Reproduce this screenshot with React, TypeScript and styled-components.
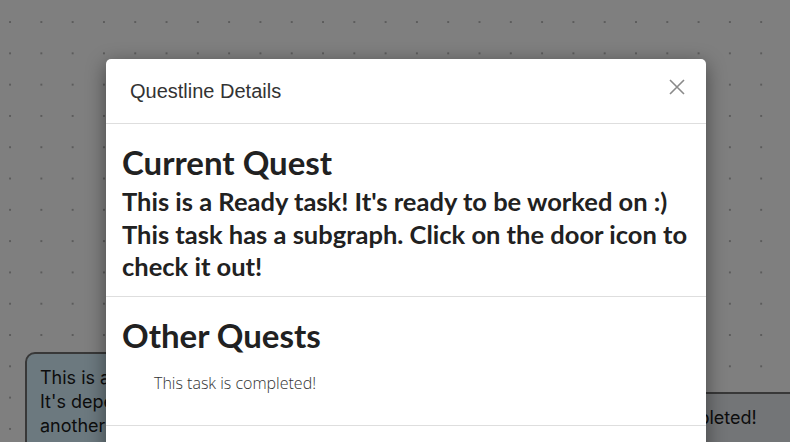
import React from "react";
import styled, { createGlobalStyle } from "styled-components";

const Global = createGlobalStyle`
  html, body { margin: 0; padding: 0; }
  body { width: 790px; height: 442px; overflow: hidden; font-family: "Lato", "Open Sans", sans-serif; }
  #root { width: 790px; height: 442px; }
`;

const Canvas = styled.div`
  position: relative;
  width: 790px;
  height: 442px;
  overflow: hidden;
  background-color: #ffffff;
  background-image: radial-gradient(circle, #b8b8b8 0.8px, transparent 1.2px);
  background-size: 31.3px 31.3px;
  background-position: -5.6px 6.4px;
`;

const Node = styled.div<{ $x: number; $y: number; $w: number; $bg: string }>`
  position: absolute;
  left: ${(p) => p.$x}px;
  top: ${(p) => p.$y}px;
  width: ${(p) => p.$w}px;
  box-sizing: border-box;
  padding: 12px 13px;
  border: 2px solid #707070;
  border-radius: 10px;
  background: ${(p) => p.$bg};
  color: #1a1a1a;
  font-family: "Inter", sans-serif;
  font-size: 18px;
  line-height: 24px;
`;

const Backdrop = styled.div`
  position: absolute;
  inset: 0;
  background: rgba(0, 0, 0, 0.5);
`;

const Modal = styled.div`
  position: absolute;
  left: 106px;
  top: 59px;
  width: 600px;
  height: 420px;
  background: #ffffff;
  border-radius: 5px;
  box-shadow: 0 5px 20px rgba(0, 0, 0, 0.45);
  display: flex;
  flex-direction: column;
`;

const Header = styled.div`
  display: flex;
  align-items: center;
  justify-content: space-between;
  height: 64px;
  padding: 0 20px 0 24px;
  border-bottom: 1px solid #dedede;
`;

const Title = styled.h5`
  margin: 0;
  font-family: "Liberation Sans", Arial, sans-serif;
  font-weight: 400;
  font-size: 20px;
  color: #333333;
`;

const Close = styled.button`
  border: 0;
  background: none;
  padding: 0;
  width: 18px;
  height: 18px;
  display: flex;
  align-items: center;
  justify-content: center;
  margin-top: -8px;
  cursor: pointer;
`;

const Section = styled.section<{ $pb: number }>`
  padding: 16px 16px ${(p) => p.$pb}px;
  border-bottom: 1px solid #dedede;
`;

const Heading = styled.h2`
  margin: 0;
  font-family: "Lato", sans-serif;
  font-weight: 700;
  font-size: 33px;
  line-height: 45px;
  color: #212121;
`;

const Sub = styled.p`
  margin: 0;
  font-family: "Lato", sans-serif;
  font-weight: 700;
  font-size: 25.5px;
  line-height: 32.5px;
  color: #212121;
`;

const Item = styled.div`
  padding: 14px 0 0 32px;
  font-family: "Open Sans", sans-serif;
  font-weight: 300;
  font-size: 16px;
  line-height: 22px;
  color: #333333;
`;

export default function App() {
  return (
    <>
      <Global />
      <Canvas>
        <Node $x={25} $y={352} $w={290} $bg="#d9f3ff">
          This is a Blocked task!
          <br />
          It's dependent on
          <br />
          another task being done.
        </Node>
        <Node $x={546} $y={392} $w={260} $bg="#e6eaee">
          This task is completed!
        </Node>
        <Backdrop />
        <Modal>
          <Header>
            <Title>Questline Details</Title>
            <Close aria-label="Close">
              <svg width="16" height="16" viewBox="0 0 16 16">
                <path d="M1 1 L15 15 M15 1 L1 15" stroke="#8a8a8a" strokeWidth="1.6" />
              </svg>
            </Close>
          </Header>
          <Section $pb={13.5}>
            <Heading>Current Quest</Heading>
            <Sub>This is a Ready task! It's ready to be worked on :)</Sub>
            <Sub>This task has a subgraph. Click on the door icon to check it out!</Sub>
          </Section>
          <Section $pb={31}>
            <Heading>Other Quests</Heading>
            <Item>This task is completed!</Item>
          </Section>
        </Modal>
      </Canvas>
    </>
  );
}
